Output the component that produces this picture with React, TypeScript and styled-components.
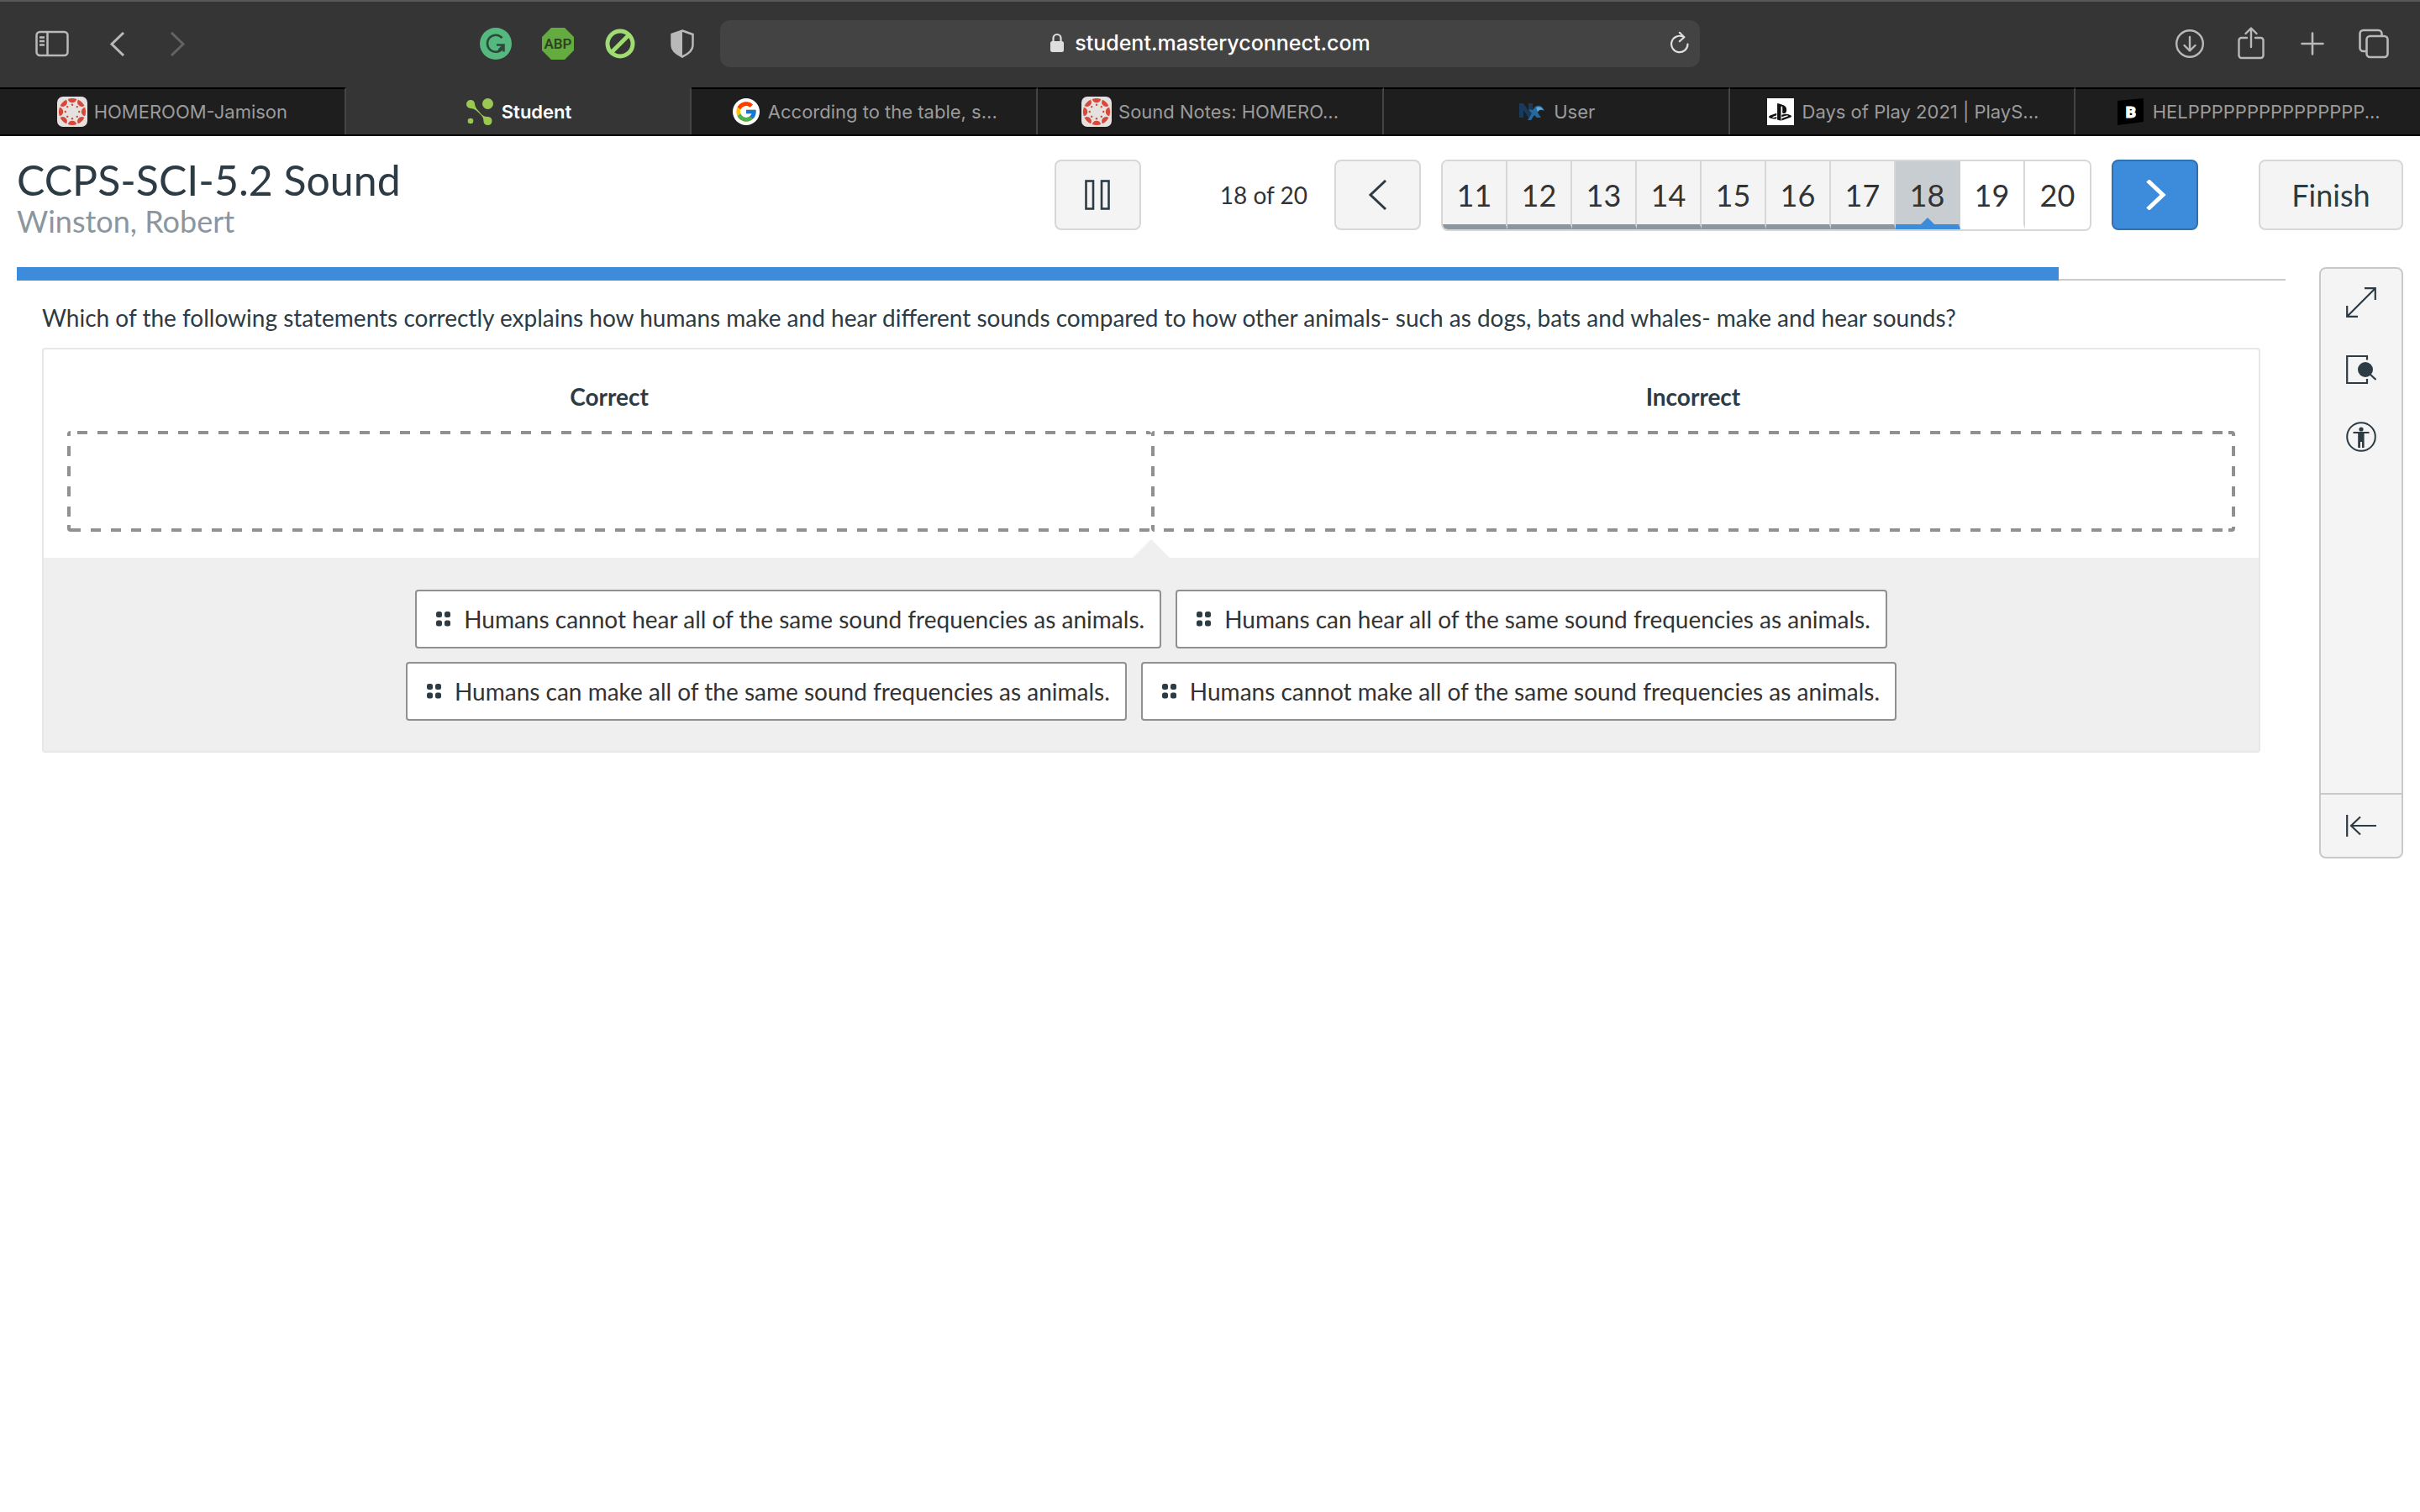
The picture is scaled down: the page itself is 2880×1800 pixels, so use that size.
import React from "react";
import styled, { createGlobalStyle, css } from "styled-components";
import { FcGoogle } from "react-icons/fc";
import { FaPlaystation } from "react-icons/fa";

const GlobalStyle = createGlobalStyle`
  *, *::before, *::after { box-sizing: border-box; }
  body {
    margin: 0;
    background: #ffffff;
    color: #2d3b45;
    font-family: Lato, "Liberation Sans", sans-serif;
  }
  button, input { font-family: inherit; margin: 0; padding: 0; }
  svg { display: block; flex: none; }
`;

/* ---------- browser chrome ---------- */

const Chrome = styled.header`
  background: #353535;
  border-top: 2px solid #585858;
  font-family: Inter, "Liberation Sans", sans-serif;
`;

const Toolbar = styled.div`
  display: grid;
  grid-template-columns: 1fr minmax(0, 1166px) 1fr;
  align-items: center;
  height: 102px;
  padding-bottom: 2px;
`;

const ToolSide = styled.div`
  display: flex;
  align-items: center;
  justify-content: space-between;
  padding: 0 26px 0 42px;
`;

const ToolEnd = styled.div`
  display: flex;
  justify-content: flex-end;
  gap: 37px;
  padding-right: 37px;
`;

const ToolGroup = styled.div<{ $gap: number }>`
  display: flex;
  align-items: center;
  gap: ${(p) => p.$gap}px;
`;

const IconButton = styled.button<{ $w?: number }>`
  display: flex;
  align-items: center;
  justify-content: center;
  width: ${(p) => p.$w ?? 38}px;
  height: 40px;
  border: 0;
  background: transparent;
  color: #b9b9b9;
`;

const AddressBar = styled.div`
  display: grid;
  grid-template-columns: 1fr auto 1fr;
  align-items: center;
  height: 56px;
  padding: 0 12px 2px;
  border-radius: 12px;
  background: #434343;
`;

const Address = styled.label`
  grid-column: 2;
  display: flex;
  align-items: center;
  gap: 12px;
`;

const AddressInput = styled.input`
  field-sizing: content;
  border: 0;
  outline: 0;
  background: transparent;
  color: #ffffff;
  font-size: 25px;
  font-weight: 500;
  line-height: 32px;
`;

const Reload = styled(IconButton)`
  justify-self: end;
  color: #dedede;
`;

const TabStrip = styled.nav`
  display: flex;
  height: 58px;
  border-bottom: 2px solid #000000;
  background: #1e1e1e;
`;

const Tab = styled.a<{ $active?: boolean }>`
  flex: 1 1 0;
  min-width: 0;
  display: flex;
  align-items: center;
  justify-content: center;
  gap: 8px;
  border-right: 2px solid #454545;
  color: #9b9b9b;
  font-size: 22px;
  line-height: 28px;
  white-space: nowrap;
  text-decoration: none;
  border-top: 2px solid #000000;
  &:last-child { border-right: 0; }
  ${(p) =>
    p.$active &&
    css`
      background: #353535;
      border-top-color: #353535;
      color: #ffffff;
      font-weight: 600;
    `}
`;

const Favicon = styled.span<{ $bg?: string; $round?: boolean }>`
  flex: none;
  display: flex;
  align-items: center;
  justify-content: center;
  width: 32px;
  height: 32px;
  margin: 0 2px;
  background: ${(p) => p.$bg ?? "transparent"};
  border-radius: ${(p) => (p.$round ? "50%" : "0")};
  color: #111111;
`;

/* ---------- test page ---------- */

const Page = styled.main`
  padding: 28px 20px;
`;

const TestHeader = styled.div`
  display: flex;
  align-items: flex-start;
  justify-content: space-between;
  height: 128px;
`;

const Title = styled.h1`
  margin: 0;
  font-size: 50px;
  font-weight: 400;
  line-height: 48px;
`;

const StudentName = styled.p`
  margin: 0;
  color: #8b969e;
  font-size: 36px;
  line-height: 50px;
`;

const Controls = styled.div`
  display: flex;
  align-items: flex-start;
`;

const NavGroup = styled.div`
  display: flex;
  align-items: flex-start;
  gap: 24px;
  margin: 0 72px 0 32px;
`;

const Control = styled.button<{ $primary?: boolean; $wide?: boolean }>`
  display: flex;
  align-items: center;
  justify-content: center;
  width: ${(p) => (p.$wide ? 172 : 103)}px;
  height: 84px;
  border: 2px solid ${(p) => (p.$primary ? "#2f71b0" : "#d6d7d8")};
  border-radius: 8px;
  background: ${(p) => (p.$primary ? "#3d8cdc" : "#f4f4f5")};
  color: ${(p) => (p.$primary ? "#ffffff" : "#2d3b45")};
  font-size: 36px;
`;

const Counter = styled.span`
  margin-left: 94px;
  color: #333333;
  font-size: 28px;
  line-height: 84px;
`;

const Pager = styled.div`
  display: flex;
  height: 85px;
  border: 2px solid #d6d7d8;
  border-radius: 8px;
`;

type CellState = "done" | "current" | "todo";

const PageCell = styled.button<{ $state: CellState }>`
  position: relative;
  width: 77px;
  padding-top: 5px;
  border: 0;
  border-right: 2px solid #d6d7d8;
  border-bottom: 6px solid transparent;
  background: #ffffff;
  color: #333333;
  font-size: 36px;
  &:first-child { border-radius: 6px 0 0 6px; }
  &:last-child { border-right: 0; border-radius: 0 6px 6px 0; }
  ${(p) =>
    p.$state === "done" &&
    css`
      background: #f4f4f5;
      border-bottom-color: #8b969e;
    `}
  ${(p) =>
    p.$state === "current" &&
    css`
      background: #c7cdd1;
      border-right-color: #c7cdd1;
      border-bottom-color: #3d8cdc;
      &::after {
        content: "";
        position: absolute;
        left: calc(50% - 8px);
        bottom: 0;
        border: 8px solid transparent;
        border-top: 0;
        border-bottom-color: #3d8cdc;
      }
    `}
`;

const Body = styled.div`
  display: flex;
  align-items: flex-start;
  gap: 40px;
`;

const Item = styled.section`
  flex: 1;
  min-width: 0;
`;

const Progress = styled.div`
  height: 16px;
  box-shadow: inset 0 -2px #c8cacb;
`;

const ProgressFill = styled.div`
  height: 100%;
  background: #3d8cdc;
`;

const Question = styled.p`
  margin: 24px 30px 16px;
  font-size: 28px;
  line-height: 40px;
`;

const Card = styled.div`
  margin: 0 30px;
  border: 2px solid #e6e7e7;
  border-radius: 4px;
`;

const Columns = styled.div`
  display: grid;
  grid-template-columns: 1fr 1fr;
  padding: 36px 28px 31px;
`;

const ColumnTitle = styled.h2`
  margin: 0 0 21px;
  font-size: 28px;
  font-weight: 700;
  line-height: 40px;
  text-align: center;
`;

const dash = "#909090";

const DropZone = styled.div<{ $last?: boolean }>`
  height: 120px;
  border-radius: 4px;
  background-image: linear-gradient(90deg, ${dash} 50%, transparent 50%),
    linear-gradient(90deg, ${dash} 50%, transparent 50%),
    linear-gradient(${dash} 50%, transparent 50%),
    linear-gradient(${dash}, ${dash}),
    linear-gradient(${dash} 50%, transparent 50%),
    linear-gradient(${dash}, ${dash}),
    linear-gradient(${dash}, ${dash});
  background-size: 24px 4px, 24px 4px, 4px 24px, 4px 8px, 4px 24px, 8px 4px, 8px 4px;
  background-repeat: repeat-x, repeat-x, repeat-y, no-repeat, repeat-y, no-repeat, no-repeat;
  background-position: ${(p) =>
    p.$last
      ? "15px 0, 15px 100%, 0 18px, 0 100%, 100% 18px, 100% 0, 100% 100%"
      : "12px 0, 4px 100%, 0 18px, 0 100%, -8px 0, -8px 0, 0 100%"};
`;

const Pool = styled.div`
  position: relative;
  display: flex;
  flex-wrap: wrap;
  justify-content: center;
  gap: 16px 17px;
  padding: 38px 400px 36px;
  background: #efefef;
  &::before {
    content: "";
    position: absolute;
    left: calc(50% - 22px);
    bottom: 100%;
    border: 22px solid transparent;
    border-top: 0;
    border-bottom-color: #efefef;
  }
`;

const Answer = styled.button`
  display: flex;
  align-items: center;
  gap: 16px;
  height: 70px;
  padding: 0 18px 0 23px;
  border: 2px solid #909090;
  border-radius: 4px;
  background: #ffffff;
  color: #333333;
  font-size: 28px;
  line-height: 40px;
  white-space: nowrap;
`;

const Tools = styled.aside`
  display: flex;
  flex-direction: column;
  width: 100px;
  height: 704px;
  border: 2px solid #c7cacc;
  border-radius: 8px;
  background: #f4f4f5;
`;

const Tool = styled.button<{ $foot?: boolean }>`
  display: flex;
  align-items: center;
  justify-content: center;
  height: 80px;
  border: 0;
  background: transparent;
  color: #2d3b45;
  ${(p) =>
    p.$foot &&
    css`
      height: 76px;
      margin-top: auto;
      border-top: 2px solid #c7cacc;
    `}
`;

/* ---------- drawings ---------- */

const CanvasLogo = () => (
  <svg width="36" height="36" viewBox="0 0 36 36" aria-hidden="true">
    <rect width="36" height="36" rx="7" fill="#e4e1de" />
    {[0, 45, 90, 135, 180, 225, 270, 315].map((a) => (
      <g key={a} transform={`rotate(${a} 18 18)`} fill="#d6483b">
        <path d="M12.8 2.9Q18 0.9 23.2 2.9Q22 7.2 18 7.2Q14 7.2 12.8 2.9Z" />
        <circle cx="18" cy="9.8" r="1.2" />
      </g>
    ))}
  </svg>
);

const MasteryLogo = () => (
  <svg width="32" height="32" viewBox="0 0 32 32" fill="#9bc853" aria-hidden="true">
    <circle cx="25.5" cy="6.5" r="6.5" />
    <circle cx="5" cy="27" r="3.3" />
    <path d="M5 2a5 5 0 0 1 5 4.6C10.300 11 13 13.500 17 18c3 3.400 5.500 4 9 4a5 5 0 1 1-5.500 5.500c0-3.500-1-5.500-4-8.500C12.500 15 9.500 12 5 12A5 5 0 0 1 5 2z" />
  </svg>
);

const KnightLogo = () => (
  <svg width="32" height="24" viewBox="0 0 32 24" aria-hidden="true">
    <path d="M1 19V2h5l6 9V2h5v17h-5L6 10v9z" fill="#183a5e" />
    <path d="M12 9l5 1 3-4c5-3 9 0 11 5-4-2-7-1-8 2l4 6h-5l-3-3-4 6h-4l5-8z" fill="#26699f" />
    <path d="M21 7c4-2 7 0 9 3-4-1-6 0-7 2z" fill="#6ba6cf" />
  </svg>
);

const BLogo = () => (
  <svg width="32" height="32" viewBox="0 0 32 32" aria-hidden="true">
    <path d="M0 3L31 0v28L0 32z" fill="#000" />
    <text x="16" y="23" textAnchor="middle" fill="#fff" stroke="#fff" strokeWidth="1" fontFamily="Roboto, sans-serif" fontWeight="900" fontSize="19">B</text>
  </svg>
);

const SidebarIcon = () => (
  <svg width="40" height="32" viewBox="0 0 40 32" fill="none" stroke="currentColor" strokeWidth="2.500" aria-hidden="true">
    <rect x="1.500" y="2" width="37" height="28" rx="4" />
    <path d="M14.500 2v28M5 8.500h6M5 13h6M5 17.500h6" />
  </svg>
);

const Chevron = ({ dir, w, h, stroke }: { dir: "left" | "right"; w: number; h: number; stroke: number }) => {
  const near = stroke;
  const far = w - stroke;
  const a = dir === "left" ? far : near;
  const b = dir === "left" ? near : far;
  return (
    <svg width={w} height={h} viewBox={`0 0 ${w} ${h}`} fill="none" stroke="currentColor" strokeWidth={stroke} aria-hidden="true">
      <path d={`M${a} 1L${b} ${h / 2}L${a} ${h - 1}`} />
    </svg>
  );
};

const GrammarIcon = () => (
  <svg width="38" height="38" viewBox="0 0 38 38" aria-hidden="true">
    <circle cx="19" cy="19" r="19" fill="#55b87e" />
    <g fill="none" stroke="#2b4a3a" strokeWidth="2.600">
      <path d="M26.500 12.200A10 10 0 1 0 27.500 24" />
      <path d="M20 20.500h8.500v8M28 21l-5.500 6" />
    </g>
  </svg>
);

const AbpIcon = () => (
  <svg width="38" height="38" viewBox="0 0 38 38" aria-hidden="true">
    <path d="M11 0h16l11 11v16L27 38H11L0 27V11z" fill="#64ab40" />
    <text x="19" y="25" textAnchor="middle" fill="#2c4322" fontFamily="Roboto, sans-serif" fontWeight="600" fontSize="17">ABP</text>
  </svg>
);

const BlockIcon = () => (
  <svg width="36" height="36" viewBox="0 0 36 36" fill="none" stroke="#9fdd72" strokeWidth="5" aria-hidden="true">
    <circle cx="18" cy="18" r="15" />
    <path d="M8 28L28 8" />
  </svg>
);

const ShieldIcon = () => (
  <svg width="28" height="34" viewBox="0 0 28 34" aria-hidden="true">
    <path d="M14 1.500L26.500 6v13c0 6-5 10-12.500 13.500C6.500 29 1.500 25 1.500 19V6z" fill="none" stroke="currentColor" strokeWidth="2.500" />
    <path d="M14 1.500v31C6.500 29 1.500 25 1.500 19V6z" fill="currentColor" />
  </svg>
);

const LockIcon = () => (
  <svg width="18" height="24" viewBox="0 0 18 24" aria-hidden="true">
    <rect x="1" y="10" width="16" height="13" rx="2.500" fill="#dedede" />
    <path d="M4.500 11V6.500a4.500 4.500 0 0 1 9 0V11" fill="none" stroke="#dedede" strokeWidth="2.200" />
  </svg>
);

const ReloadIcon = () => (
  <svg width="24" height="28" viewBox="0 0 24 28" fill="none" stroke="currentColor" strokeWidth="2.200" strokeLinecap="round" strokeLinejoin="round" aria-hidden="true">
    <path d="M21.500 15.500a9.700 9.700 0 1 1-5.200-8.600" />
    <path d="M11.800 1.800l5.600 5.400-5.600 5" />
  </svg>
);

const DownloadIcon = () => (
  <svg width="36" height="36" viewBox="0 0 36 36" fill="none" stroke="currentColor" strokeWidth="2.400" strokeLinecap="round" strokeLinejoin="round" aria-hidden="true">
    <circle cx="18" cy="18" r="15.800" />
    <path d="M18 10v16M11.500 20l6.500 6.500 6.500-6.500" />
  </svg>
);

const ShareIcon = () => (
  <svg width="36" height="40" viewBox="0 0 36 40" fill="none" stroke="currentColor" strokeWidth="2.400" strokeLinecap="round" strokeLinejoin="round" aria-hidden="true">
    <path d="M13 13H6.500a3 3 0 0 0-3 3v18a3 3 0 0 0 3 3h23a3 3 0 0 0 3-3V16a3 3 0 0 0-3-3H23" />
    <path d="M18 24V2M11.500 8L18 1.500 24.500 8" />
  </svg>
);

const PlusIcon = () => (
  <svg width="28" height="28" viewBox="0 0 28 28" stroke="currentColor" strokeWidth="2.600" strokeLinecap="round" aria-hidden="true">
    <path d="M14 1.500v25M1.500 14h25" />
  </svg>
);

const TabsIcon = () => (
  <svg width="36" height="36" viewBox="0 0 36 36" fill="none" stroke="currentColor" strokeWidth="2.600" aria-hidden="true">
    <rect x="9.500" y="9" width="25" height="25" rx="4" />
    <path d="M9 27H5.500a4 4 0 0 1-4-4V6a4 4 0 0 1 4-4h18a4 4 0 0 1 4 4v3" />
  </svg>
);

const PauseIcon = () => (
  <svg width="30" height="36" viewBox="0 0 30 36" fill="none" stroke="currentColor" strokeWidth="2.600" aria-hidden="true">
    <rect x="1.500" y="1.500" width="8.500" height="33" />
    <rect x="20" y="1.500" width="8.500" height="33" />
  </svg>
);

const GripIcon = () => (
  <svg width="17" height="18" viewBox="0 0 17 18" fill="#2d3b45" aria-hidden="true">
    <rect width="7" height="7" rx="2.500" />
    <rect x="10" width="7" height="7" rx="2.500" />
    <rect y="10.500" width="7" height="7" rx="2.500" />
    <rect x="10" y="10.500" width="7" height="7" rx="2.500" />
  </svg>
);

const ExpandIcon = () => (
  <svg width="36" height="36" viewBox="0 0 36 36" fill="none" stroke="currentColor" strokeWidth="2.200" aria-hidden="true">
    <path d="M2 34L34 2M22 1.200h12.800V15M1.200 22v12.800H14" />
  </svg>
);

const InspectIcon = () => (
  <svg width="36" height="36" viewBox="0 0 36 36" fill="none" stroke="currentColor" strokeWidth="2.200" aria-hidden="true">
    <path d="M25 6.500V2H1.200v32H25v-5" />
    <circle cx="23" cy="18" r="9" fill="currentColor" stroke="none" />
    <path d="M28.500 23.500L35.500 30" />
  </svg>
);

const AccessIcon = () => (
  <svg width="36" height="36" viewBox="0 0 36 36" fill="none" stroke="currentColor" strokeWidth="2" aria-hidden="true">
    <circle cx="18" cy="18" r="16.800" />
    <circle cx="18" cy="9" r="2.600" fill="currentColor" stroke="none" />
    <path d="M8.500 13h19" />
    <path d="M14.200 12h7.400v19h-2.600v-7h-2v7h-2.800z" fill="currentColor" stroke="none" />
  </svg>
);

const CollapseIcon = () => (
  <svg width="36" height="26" viewBox="0 0 36 26" fill="none" stroke="currentColor" strokeWidth="2.200" aria-hidden="true">
    <path d="M1.200 0v26M36 13H6M17 2.500L6 13l11 10.500" />
  </svg>
);

/* ---------- data ---------- */

const tabs = [
  { label: "HOMEROOM-Jamison", icon: <CanvasLogo /> },
  { label: "Student", icon: <Favicon><MasteryLogo /></Favicon>, active: true },
  { label: "According to the table, s...", icon: <Favicon $bg="#ffffff" $round><FcGoogle size={28} /></Favicon> },
  { label: "Sound Notes: HOMERO...", icon: <CanvasLogo /> },
  { label: "User", icon: <Favicon><KnightLogo /></Favicon> },
  { label: "Days of Play 2021 | PlayS...", icon: <Favicon $bg="#ffffff"><FaPlaystation size={27} /></Favicon> },
  { label: "HELPPPPPPPPPPPPPPP...", icon: <Favicon><BLogo /></Favicon> },
];

const answers = [
  "Humans cannot hear all of the same sound frequencies as animals.",
  "Humans can hear all of the same sound frequencies as animals.",
  "Humans can make all of the same sound frequencies as animals.",
  "Humans cannot make all of the same sound frequencies as animals.",
];

const pages = [11, 12, 13, 14, 15, 16, 17, 18, 19, 20];
const current = 18;
const total = 20;

const stateOf = (n: number): CellState => (n < current ? "done" : n === current ? "current" : "todo");

export default function App() {
  return (
    <>
      <GlobalStyle />
      <Chrome>
        <Toolbar>
          <ToolSide>
            <ToolGroup $gap={38}>
              <IconButton $w={40} aria-label="Sidebar"><SidebarIcon /></IconButton>
              <ToolGroup $gap={31}>
                <IconButton $w={40} aria-label="Back"><Chevron dir="left" w={20} h={29} stroke={3} /></IconButton>
                <IconButton $w={40} aria-label="Forward" style={{ opacity: 0.35 }}><Chevron dir="right" w={20} h={29} stroke={3} /></IconButton>
              </ToolGroup>
            </ToolGroup>
            <ToolGroup $gap={36}>
              <IconButton aria-label="Grammar checker"><GrammarIcon /></IconButton>
              <IconButton aria-label="Ad blocker"><AbpIcon /></IconButton>
              <IconButton aria-label="Content blocker"><BlockIcon /></IconButton>
              <IconButton aria-label="Privacy report"><ShieldIcon /></IconButton>
            </ToolGroup>
          </ToolSide>
          <AddressBar>
            <Address>
              <LockIcon />
              <AddressInput aria-label="Address" defaultValue="student.masteryconnect.com" />
            </Address>
            <Reload $w={24} aria-label="Reload"><ReloadIcon /></Reload>
          </AddressBar>
          <ToolEnd>
            <IconButton $w={36} aria-label="Downloads"><DownloadIcon /></IconButton>
            <IconButton $w={36} aria-label="Share"><ShareIcon /></IconButton>
            <IconButton $w={36} aria-label="New tab"><PlusIcon /></IconButton>
            <IconButton $w={36} aria-label="Tab overview"><TabsIcon /></IconButton>
          </ToolEnd>
        </Toolbar>
        <TabStrip>
          {tabs.map((t) => (
            <Tab key={t.label} href="#" $active={t.active}>
              {t.icon}
              <span>{t.label}</span>
            </Tab>
          ))}
        </TabStrip>
      </Chrome>

      <Page>
        <TestHeader>
          <div>
            <Title>CCPS-SCI-5.2 Sound</Title>
            <StudentName>Winston, Robert</StudentName>
          </div>
          <Controls>
            <Control aria-label="Pause"><PauseIcon /></Control>
            <Counter>{current} of {total}</Counter>
            <NavGroup>
              <Control aria-label="Previous"><Chevron dir="left" w={24} h={36} stroke={3} /></Control>
              <Pager>
                {pages.map((n) => (
                  <PageCell key={n} $state={stateOf(n)}>{n}</PageCell>
                ))}
              </Pager>
              <Control $primary aria-label="Next"><Chevron dir="right" w={28} h={36} stroke={5} /></Control>
            </NavGroup>
            <Control $wide>Finish</Control>
          </Controls>
        </TestHeader>

        <Body>
          <Item>
            <Progress>
              <ProgressFill style={{ width: `${(current / total) * 100}%` }} />
            </Progress>
            <Question>
              Which of the following statements correctly explains how humans make and hear different sounds compared to how other animals- such as dogs, bats and whales- make and hear sounds?
            </Question>
            <Card>
              <Columns>
                <ColumnTitle>Correct</ColumnTitle>
                <ColumnTitle>Incorrect</ColumnTitle>
                <DropZone />
                <DropZone $last />
              </Columns>
              <Pool>
                {answers.map((a) => (
                  <Answer key={a}>
                    <GripIcon />
                    <span>{a}</span>
                  </Answer>
                ))}
              </Pool>
            </Card>
          </Item>
          <Tools>
            <Tool aria-label="Full screen"><ExpandIcon /></Tool>
            <Tool aria-label="Review"><InspectIcon /></Tool>
            <Tool aria-label="Accessibility"><AccessIcon /></Tool>
            <Tool $foot aria-label="Collapse toolbar"><CollapseIcon /></Tool>
          </Tools>
        </Body>
      </Page>
    </>
  );
}
